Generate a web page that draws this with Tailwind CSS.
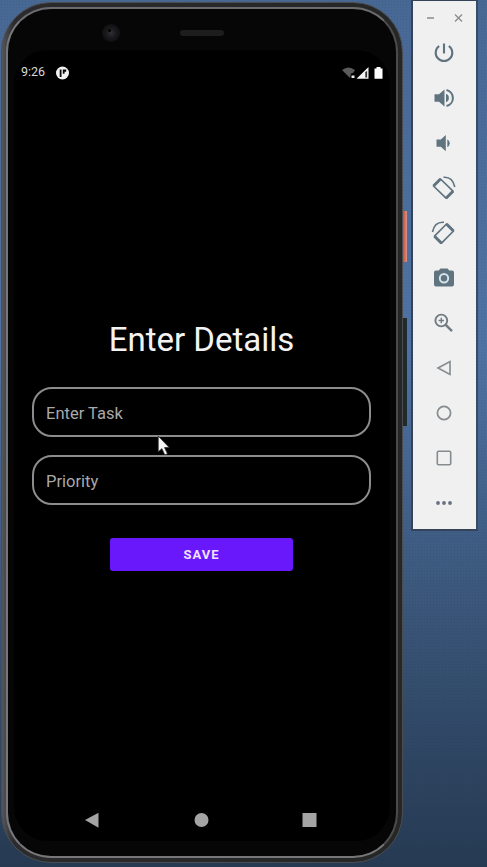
<!DOCTYPE html>
<html lang="en">
<head>
<meta charset="utf-8">
<title>Enter Details</title>
<script src="https://cdn.jsdelivr.net/npm/@tailwindcss/browser@4"></script>
</head>
<body class="w-[487px] h-[867px] overflow-hidden bg-linear-to-b from-[#486894] via-[#4f73a3] via-40% to-[#263a52] font-['Roboto',sans-serif]">
<div class="flex items-start w-full h-full bg-[radial-gradient(#1a2f5026_0.8px,transparent_1px)] bg-size-[3px_3px]">

  <!-- Phone -->
  <div class="relative shrink-0 mt-[2px] ml-[1px] w-[402px] h-[861px] rounded-[50px] bg-linear-to-r from-[#55565a] via-[#2b2b2d] via-3% to-[#252626] border border-[#4c4d51] p-1">
    <div class="w-full h-full rounded-[45px] border-2 border-t-[#6c6c6f] border-l-[#77777b] border-r-[#4b4b4b] border-b-[#777679] bg-[#060607] px-[6px] flex flex-col">
      <div class="h-[41px] relative shrink-0">
        <div class="absolute left-[88px] top-[15px] w-[18px] h-[18px] rounded-full bg-[radial-gradient(circle,#303033_0,#19191b_40%,#101012_70%)]"></div>
        <div class="absolute left-[94px] top-[20px] w-[3px] h-[3px] rounded-full bg-black"></div>
        <div class="absolute left-[166px] top-[21px] w-[44px] h-[6px] rounded-full bg-[#1d1d1e]"></div>
      </div>
      <div class="h-[791px] rounded-[34px] bg-black flex flex-col">
        <div class="flex items-center h-[45px] pl-[7px] pr-[7px] text-[#d9d9d9]">
          <span class="text-[12.5px] leading-none w-[35px]">9:26</span>
          <svg width="13" height="14" viewBox="0 0 13 14"><circle cx="6.5" cy="7" r="6.5" fill="#f2f2f2"/><path d="M4.600 3.500v7.500" fill="none" stroke="#090909" stroke-width="1.800"/><path d="M6.800 3.500h3.400v2.300H8.600v2H6.800z" fill="#090909"/></svg>
          <svg class="ml-auto" width="41" height="14" viewBox="0 0 41 14">
            <path d="M0 4Q6.500-1 13 4L11 7 9 7.500 8 12Z" fill="#5b5b5b"/><path d="M9.500 9.500h3V12h-3z" fill="#eee"/>
            <path d="M14.500 12.700 26.500 1v11.700z" fill="#f4f4f4"/><path d="M23.300 6v5.500h1.800V5z" fill="#333"/>
            <path d="M32.500 2.500h2V1h4v1.500h2v10.200h-8z" fill="#fff"/>
          </svg>
        </div>
        <main class="flex-1 flex flex-col items-center pt-[225px] pr-[1px]">
          <h1 class="text-[33px] leading-[40px] text-[#f3f3f3] whitespace-nowrap">Enter Details</h1>
          <input aria-label="Enter Task" placeholder="Enter Task" class="mt-[27px] w-[339px] h-[50px] rounded-[20px] border-2 border-[#8c8c8c] bg-black px-[12px] pt-[2px] text-[16.5px] placeholder:text-[#a9a9a9] placeholder:opacity-100">
          <input aria-label="Priority" placeholder="Priority" class="mt-[18px] w-[339px] h-[50px] rounded-[20px] border-2 border-[#8c8c8c] bg-black px-[12px] pt-[2px] text-[16.5px] placeholder:text-[#a9a9a9] placeholder:opacity-100">
          <button class="mt-[33px] w-[183px] h-[33px] rounded-[3px] bg-[#6818fb] text-[#f0e2ff] text-[13px] font-bold tracking-[1px]">SAVE</button>
        </main>
        <nav class="h-[29px] flex items-start pl-[71px]">
          <svg width="232" height="16" viewBox="0 0 232 16" fill="#a4a4a4"><path d="M0 8 13.500.700v15z"/><circle cx="116.500" cy="8" r="7"/><path d="M217.500 1h14v14h-14z"/></svg>
        </nav>
      </div>
    </div>
    <div class="absolute left-[401px] top-[208px] w-[4px] h-[51px] bg-linear-to-r from-[#c84c38] to-[#d99385]"></div>
    <div class="absolute left-[401px] top-[315px] w-[4px] h-[108px] bg-[#202a2d]"></div>
  </div>

  <!-- Emulator controls -->
  <aside class="shrink-0 ml-[8px] w-[67px] h-[531px] bg-[#f0f0f0] border-2 border-[#34435a] border-t border-r-[#394b66] flex flex-col items-center pr-[2px] text-[#607480]">
    <div class="flex w-full h-[29px] shrink-0 pl-[14px] pt-[12px]">
      <svg width="36" height="10" viewBox="0 0 36 10" fill="none" stroke="#8b8b8b" stroke-width="1.300"><path d="M0 5h7M28 1.500l7 7m0-7-7 7"/></svg>
    </div>
    <div class="flex flex-col items-center">
      <div class="h-[45px] flex items-center"><svg width="24" height="24" viewBox="0 0 24 24" fill="none" stroke="currentColor" stroke-width="2.100"><path d="M12 2.500v10M7.200 5a8.300 8.300 0 1 0 9.600 0"/></svg></div>
      <div class="h-[45px] flex items-center"><svg width="24" height="24" viewBox="0 0 24 24" fill="currentColor"><path d="M2.500 8.200v7.600h4.500l5.500 4.700V3.500L7 8.200z"/><path d="M14 7.800a4.500 4.500 0 0 1 0 8.400z"/><path d="M14.500 4a8.200 8.200 0 0 1 0 16" fill="none" stroke="currentColor" stroke-width="2"/></svg></div>
      <div class="h-[45px] flex items-center"><svg width="24" height="24" viewBox="0 0 24 24" fill="currentColor"><path d="M4.500 8.500v7.300h4.300l5 4.500V4l-5 4.500z"/><path d="M15.300 8.200a4.500 4.500 0 0 1 0 8z"/></svg></div>
      <div class="h-[45px] flex items-center pt-px"><svg width="26" height="26" viewBox="0 0 26 26" fill="none" stroke="currentColor"><path d="M9.500 4 2.500 11 15 23.200 22 16.200z" stroke-width="1.700" stroke-linejoin="round"/><path d="M9.500 4 2.500 11M15 23.200 22 16.200" stroke-width="3"/><path d="M12.500 2.300Q21.500 1.500 23.800 12" stroke-width="1.600"/></svg></div>
      <div class="h-[45px] flex items-center pt-px"><svg width="26" height="26" viewBox="0 0 26 26" fill="none" stroke="currentColor"><path d="M15.500 4 22.500 11 10.500 23.200 3.500 16.200z" stroke-width="1.700" stroke-linejoin="round"/><path d="M15.500 4 22.500 11M10.500 23.200 3.500 16.200" stroke-width="3"/><path d="M13 2.300Q3.500 1.500 1.500 12" stroke-width="1.600"/></svg></div>
      <div class="h-[45px] flex items-center"><svg width="24" height="24" viewBox="0 0 24 24"><path fill="currentColor" d="M8.500 2.500h7l1.800 2H20a2 2 0 0 1 2 2v12a2 2 0 0 1-2 2H4a2 2 0 0 1-2-2v-12a2 2 0 0 1 2-2h2.700z"/><circle cx="12" cy="12.300" r="4.200" fill="none" stroke="#d3e4eb" stroke-width="2"/></svg></div>
      <div class="h-[45px] flex items-center text-[#707b82]"><svg width="24" height="24" viewBox="0 0 24 24" fill="none" stroke="currentColor"><circle cx="9.300" cy="9.500" r="5.900" stroke-width="1.900"/><path d="M13.500 13.700l6.500 6.500" stroke-width="2.400"/><path d="M9.300 6.800v5.400M6.600 9.500h5.400" stroke-width="1.400"/></svg></div>
      <div class="h-[45px] flex items-center text-[#858b8e]"><svg width="24" height="24" viewBox="0 0 24 24" fill="none" stroke="currentColor" stroke-width="1.600"><path d="M6 12 18 5.500v13z"/></svg></div>
      <div class="h-[45px] flex items-center text-[#858b8e]"><svg width="24" height="24" viewBox="0 0 24 24" fill="none" stroke="currentColor" stroke-width="1.700"><circle cx="12" cy="12" r="6.600"/></svg></div>
      <div class="h-[45px] flex items-center text-[#858b8e]"><svg width="24" height="24" viewBox="0 0 24 24" fill="none" stroke="currentColor" stroke-width="1.600"><rect x="5.300" y="5.300" width="13.400" height="13.400" rx="1.300"/></svg></div>
      <div class="h-[45px] flex items-center text-[#68717f]"><svg width="24" height="24" viewBox="0 0 24 24" fill="currentColor"><circle cx="6" cy="12" r="1.900"/><circle cx="12" cy="12" r="1.900"/><circle cx="18" cy="12" r="1.900"/></svg></div>
    </div>
  </aside>
</div>

<!-- Mouse pointer -->
<svg class="absolute left-[157px] top-[435px]" width="14" height="21" viewBox="0 0 13 20"><path d="M1 1v15l3.500-3 2.800 6 2.500-1.200L7 12h4.500z" fill="#f5f5f5" stroke="#222" stroke-width=".7"/></svg>
</body>
</html>
